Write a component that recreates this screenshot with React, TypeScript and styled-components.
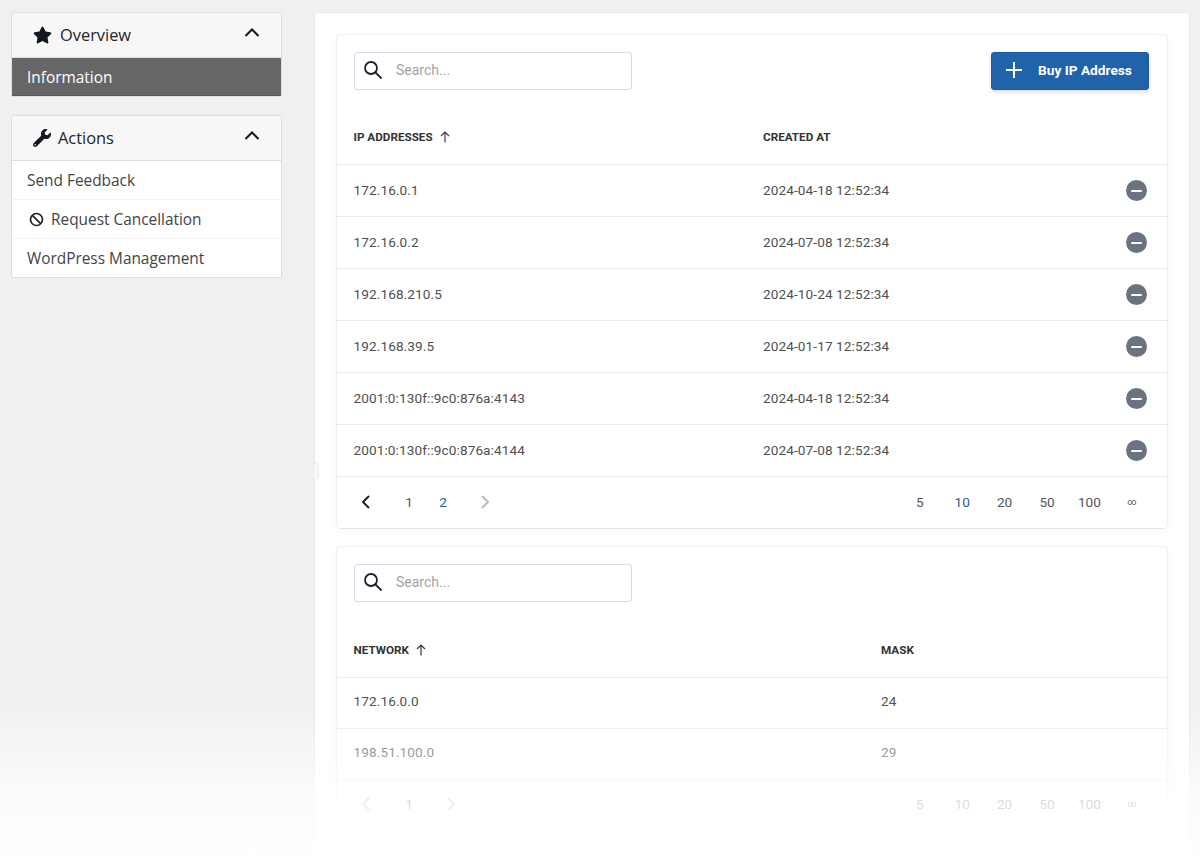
import React from "react";
import styled, { createGlobalStyle } from "styled-components";

const Global = createGlobalStyle`
  html, body { margin: 0; padding: 0; background: #f0f0f0; height: 860px; overflow: hidden; }
  * { box-sizing: border-box; }
`;

const Page = styled.div`
  position: relative;
  width: 1200px;
  height: 860px;
  overflow: hidden;
  display: flex;
  align-items: flex-start;
  padding: 12px 10px 0 11px;
  gap: 32px;
  font-family: "Open Sans", sans-serif;
`;

const Fade = styled.div`
  position: absolute;
  left: 0;
  right: 0;
  bottom: 0;
  height: 160px;
  background: linear-gradient(to bottom, rgba(255,255,255,0) 0%, rgba(255,255,255,0.72) 55%, #fff 100%);
  pointer-events: none;
`;

const Sidebar = styled.aside`
  width: 271px;
  flex: none;
  display: flex;
  flex-direction: column;
  gap: 18px;
`;

const SideCard = styled.section`
  background: #fff;
  border: 1px solid #ddd;
  border-radius: 3px 3px 2px 2px;
  overflow: hidden;
`;

const SideHead = styled.header`
  height: 45px;
  background: #f7f7f7;
  border-bottom: 1px solid #ddd;
  display: flex;
  align-items: center;
  padding: 0 21px 2px 21px;
  font-size: 16.4px;
  color: #212529;
  svg.lead { flex: none; margin-top: 2px; }
  svg.toggle { margin-top: -1px; }
`;

const SideTitle = styled.span<{ $gap: number }>`
  margin-left: ${(p) => p.$gap}px;
  flex: 1;
`;

const ActiveItem = styled.div`
  height: 38px;
  background: #666;
  border-bottom: 1px solid #555;
  color: #fff;
  font-size: 15.4px;
  font-weight: 500;
  display: flex;
  align-items: center;
  padding: 2px 0 0 15px;
`;

const SideItem = styled.div`
  height: 39px;
  display: flex;
  align-items: center;
  padding: 0 0 0 15px;
  gap: 7px;
  font-size: 15.4px;
  color: #444;
  border-bottom: 1px solid #f3f3f3;
  &:last-child { border-bottom: 0; height: 38px; padding-top: 1px; }
`;

const Panel = styled.main`
  position: relative;
  width: 876px;
  flex: none;
  height: 860px;
  background: #fff;
  border: 1px solid #e6e6e6;
  border-radius: 4px 4px 0 0;
  padding: 21px 21px 0 21px;
  display: flex;
  flex-direction: column;
  gap: 17px;
  font-family: Roboto, sans-serif;
  &::before {
    content: "";
    position: absolute;
    left: -1px;
    top: 450px;
    width: 4px;
    height: 14px;
    background: #f8f8f8;
    border: 1px solid #eeeeee;
    border-left: 0;
    border-radius: 0 2px 2px 0;
  }
`;

const Card = styled.section`
  position: relative;
  background: #fff;
  border: 1px solid #eef0f3;
  border-bottom-color: #e3e6ea;
  border-radius: 5px;
  box-shadow: 0 2px 10px rgba(0, 0, 0, 0.04);
`;

const Toolbar = styled.div`
  display: flex;
  justify-content: space-between;
  align-items: center;
  padding: 17px 18px 0 17px;
`;

const SearchBox = styled.div`
  width: 278px;
  height: 37.5px;
  border: 1px solid #d6dae6;
  border-radius: 3px;
  display: flex;
  align-items: center;
  padding: 0 0 2px 7px;
  gap: 12px;
  font-size: 14px;
  color: #a3a3a3;
`;

const BuyButton = styled.button`
  width: 158px;
  height: 37.5px;
  border: 1px solid #1a5aa6;
  border-radius: 3px;
  background: #2063ab;
  box-shadow: 0 2px 4px rgba(0, 0, 0, 0.14);
  color: #fff;
  font-family: Roboto, sans-serif;
  font-size: 13.7px;
  font-weight: 700;
  display: flex;
  align-items: center;
  padding: 0 0 2px 13px;
  gap: 15px;
`;

const Row = styled.div<{ $cols: string; $h: number; $lift: number }>`
  display: grid;
  grid-template-columns: ${(p) => p.$cols};
  align-items: center;
  height: ${(p) => p.$h}px;
  padding: 0 20px ${(p) => p.$lift}px 16.5px;
  border-top: 1px solid #e8ebf0;
  font-size: 13.6px;
  letter-spacing: 0.1px;
  color: #4f4f4f;
`;

const HeadRow = styled.div<{ $cols: string; $top: number }>`
  display: grid;
  grid-template-columns: ${(p) => p.$cols};
  align-items: center;
  margin-top: ${(p) => p.$top}px;
  height: 53px;
  padding: 0 20px 2px 16.5px;
  font-size: 11.7px;
  font-weight: 700;
  color: #333;
`;

const HeadCell = styled.span`
  display: inline-flex;
  align-items: center;
  gap: 7px;
`;

const Remove = styled.span`
  justify-self: end;
  margin-top: 2px;
  width: 21px;
  height: 21px;
  border-radius: 50%;
  background: #6b7280;
  display: flex;
  align-items: center;
  justify-content: center;
  &::before {
    content: "";
    width: 11px;
    height: 2px;
    border-radius: 1px;
    background: #fff;
  }
`;

const Footer = styled.div<{ $lift: number }>`
  height: 52px;
  border-top: 1px solid #e8ebf0;
  display: flex;
  align-items: center;
  justify-content: space-between;
  padding: 0 14px ${(p) => p.$lift}px 22px;
  font-size: 13.6px;
  font-weight: 400;
  color: #555;
`;

const Pager = styled.div`
  display: flex;
  align-items: center;
`;

const PageList = styled.div`
  display: flex;
  margin: 0 17px;
`;

const PageNum = styled.span<{ $active?: boolean }>`
  width: 34px;
  text-align: center;
  color: ${(p) => (p.$active ? "#1b5ea8" : "#555")};
`;

const Sizes = styled.div`
  display: flex;
  align-items: center;
`;

const SizeItem = styled.span<{ $active?: boolean }>`
  width: 42.4px;
  text-align: center;
  color: ${(p) => (p.$active ? "#1b5ea8" : "#555")};
`;

const InfinityItem = styled(SizeItem)`
  font-size: 9px;
`;

const Chevron = ({ dir, color, className }: { dir: "up" | "left" | "right"; color: string; className?: string }) => {
  const d = dir === "up" ? "M1.5 10 L8 3.5 L14.5 10" : dir === "left" ? "M10 2 L4 8 L10 14" : "M5 2 L11 8 L5 14";
  return (
    <svg className={className} width="16" height="16" viewBox="0 0 16 16" fill="none" stroke={color} strokeWidth="2" style={{ flex: "none" }}>
      <path d={d} />
    </svg>
  );
};

const SearchIcon = () => (
  <svg width="22" height="22" viewBox="0 0 22 22" fill="none" stroke="#1c2430" strokeWidth="1.8">
    <circle cx="9" cy="9" r="6" />
    <path d="M13.5 13.5 L19.5 19.5" />
  </svg>
);

const ArrowUp = ({ color }: { color: string }) => (
  <svg width="10" height="12" viewBox="0 0 10 12" fill="none" stroke={color} strokeWidth="1.2">
    <path d="M5 11.5 V1 M1 5 L5 1 L9 5" />
  </svg>
);

const ipRows = [
  ["172.16.0.1", "2024-04-18 12:52:34"],
  ["172.16.0.2", "2024-07-08 12:52:34"],
  ["192.168.210.5", "2024-10-24 12:52:34"],
  ["192.168.39.5", "2024-01-17 12:52:34"],
  ["2001:0:130f::9c0:876a:4143", "2024-04-18 12:52:34"],
  ["2001:0:130f::9c0:876a:4144", "2024-07-08 12:52:34"],
];
const netRows = [
  ["172.16.0.0", "24"],
  ["198.51.100.0", "29"],
];
const sizes = ["5", "10", "20", "50", "100"];

const Cols1 = "409.5px 1fr 22px";
const Cols2 = "527.5px 1fr";

const PageSizes = () => (
  <Sizes>
    {sizes.map((s) => (
      <SizeItem key={s} $active={s === "10"}>{s}</SizeItem>
    ))}
    <InfinityItem>∞</InfinityItem>
  </Sizes>
);

export default function App() {
  return (
    <>
      <Global />
      <Page>
        <Sidebar>
          <SideCard>
            <SideHead>
              <svg className="lead" width="19" height="18" viewBox="0 0 576 512" fill="#14181f">
                <path d="M259.3 17.8 194 150.2 47.9 171.5c-26.2 3.8-36.7 36.1-17.7 54.6l105.7 103-25 145.5c-4.5 26.3 23.2 46 46.4 33.7L288 439.6l130.7 68.7c23.2 12.2 50.9-7.4 46.4-33.7l-25-145.5 105.7-103c19-18.5 8.5-50.8-17.7-54.6L382 150.2 316.7 17.8c-11.7-23.6-45.6-23.9-57.4 0z" />
              </svg>
              <SideTitle $gap={8}>Overview</SideTitle>
              <Chevron className="toggle" dir="up" color="#14181f" />
            </SideHead>
            <ActiveItem>Information</ActiveItem>
          </SideCard>
          <SideCard>
            <SideHead>
              <svg className="lead" width="18" height="18" viewBox="0 0 512 512" fill="#14181f">
                <path d="M507.73 109.1c-2.24-9.03-13.54-12.09-20.12-5.51l-74.36 74.36-67.88-11.31-11.31-67.88 74.36-74.36c6.62-6.62 3.43-17.9-5.66-20.16-47.38-11.74-99.55.91-136.58 37.93-39.64 39.64-50.55 97.1-34.05 147.2L18.74 402.76c-24.99 24.99-24.99 65.51 0 90.5 24.99 24.99 65.51 24.99 90.5 0l213.21-213.21c50.12 16.71 107.47 5.68 147.37-34.22 37.07-37.07 49.7-89.32 37.91-136.73zM64 472c-13.25 0-24-10.75-24-24 0-13.26 10.75-24 24-24s24 10.74 24 24c0 13.25-10.75 24-24 24z" />
              </svg>
              <SideTitle $gap={7}>Actions</SideTitle>
              <Chevron className="toggle" dir="up" color="#14181f" />
            </SideHead>
            <SideItem>Send Feedback</SideItem>
            <SideItem>
              <svg width="15" height="15" viewBox="0 0 15 15" fill="none" stroke="#222" strokeWidth="1.7" style={{ marginLeft: 2, flex: "none" }}>
                <circle cx="7.5" cy="7.5" r="6" />
                <path d="M3.3 3.3 L11.7 11.7" />
              </svg>
              Request Cancellation
            </SideItem>
            <SideItem>WordPress Management</SideItem>
          </SideCard>
        </Sidebar>
        <Panel>
          <Card>
            <Toolbar>
              <SearchBox><SearchIcon />Search...</SearchBox>
              <BuyButton>
                <svg width="18" height="18" viewBox="0 0 18 18" stroke="#fff" strokeWidth="2" fill="none">
                  <path d="M9 1 V17 M1 9 H17" />
                </svg>
                Buy IP Address
              </BuyButton>
            </Toolbar>
            <HeadRow $cols={Cols1} $top={21.5}>
              <HeadCell>IP ADDRESSES <ArrowUp color="#5a2a55" /></HeadCell>
              <span>CREATED AT</span>
              <span />
            </HeadRow>
            {ipRows.map(([ip, at]) => (
              <Row key={ip} $cols={Cols1} $h={52} $lift={2}>
                <span>{ip}</span>
                <span>{at}</span>
                <Remove />
              </Row>
            ))}
            <Footer $lift={2}>
              <Pager>
                <Chevron dir="left" color="#1c2430" />
                <PageList>
                  <PageNum>1</PageNum>
                  <PageNum $active>2</PageNum>
                </PageList>
                <Chevron dir="right" color="#b9b9b9" />
              </Pager>
              <PageSizes />
            </Footer>
          </Card>
          <Card>
            <Toolbar>
              <SearchBox><SearchIcon />Search...</SearchBox>
            </Toolbar>
            <HeadRow $cols={Cols2} $top={22.5}>
              <HeadCell>NETWORK <ArrowUp color="#333" /></HeadCell>
              <span>MASK</span>
            </HeadRow>
            {netRows.map(([n, m]) => (
              <Row key={n} $cols={Cols2} $h={51} $lift={5}>
                <span>{n}</span>
                <span>{m}</span>
              </Row>
            ))}
            <Footer $lift={4}>
              <Pager>
                <Chevron dir="left" color="#b9b9b9" />
                <PageList>
                  <PageNum $active>1</PageNum>
                </PageList>
                <Chevron dir="right" color="#b9b9b9" />
              </Pager>
              <PageSizes />
            </Footer>
          </Card>
        </Panel>
        <Fade />
      </Page>
    </>
  );
}
